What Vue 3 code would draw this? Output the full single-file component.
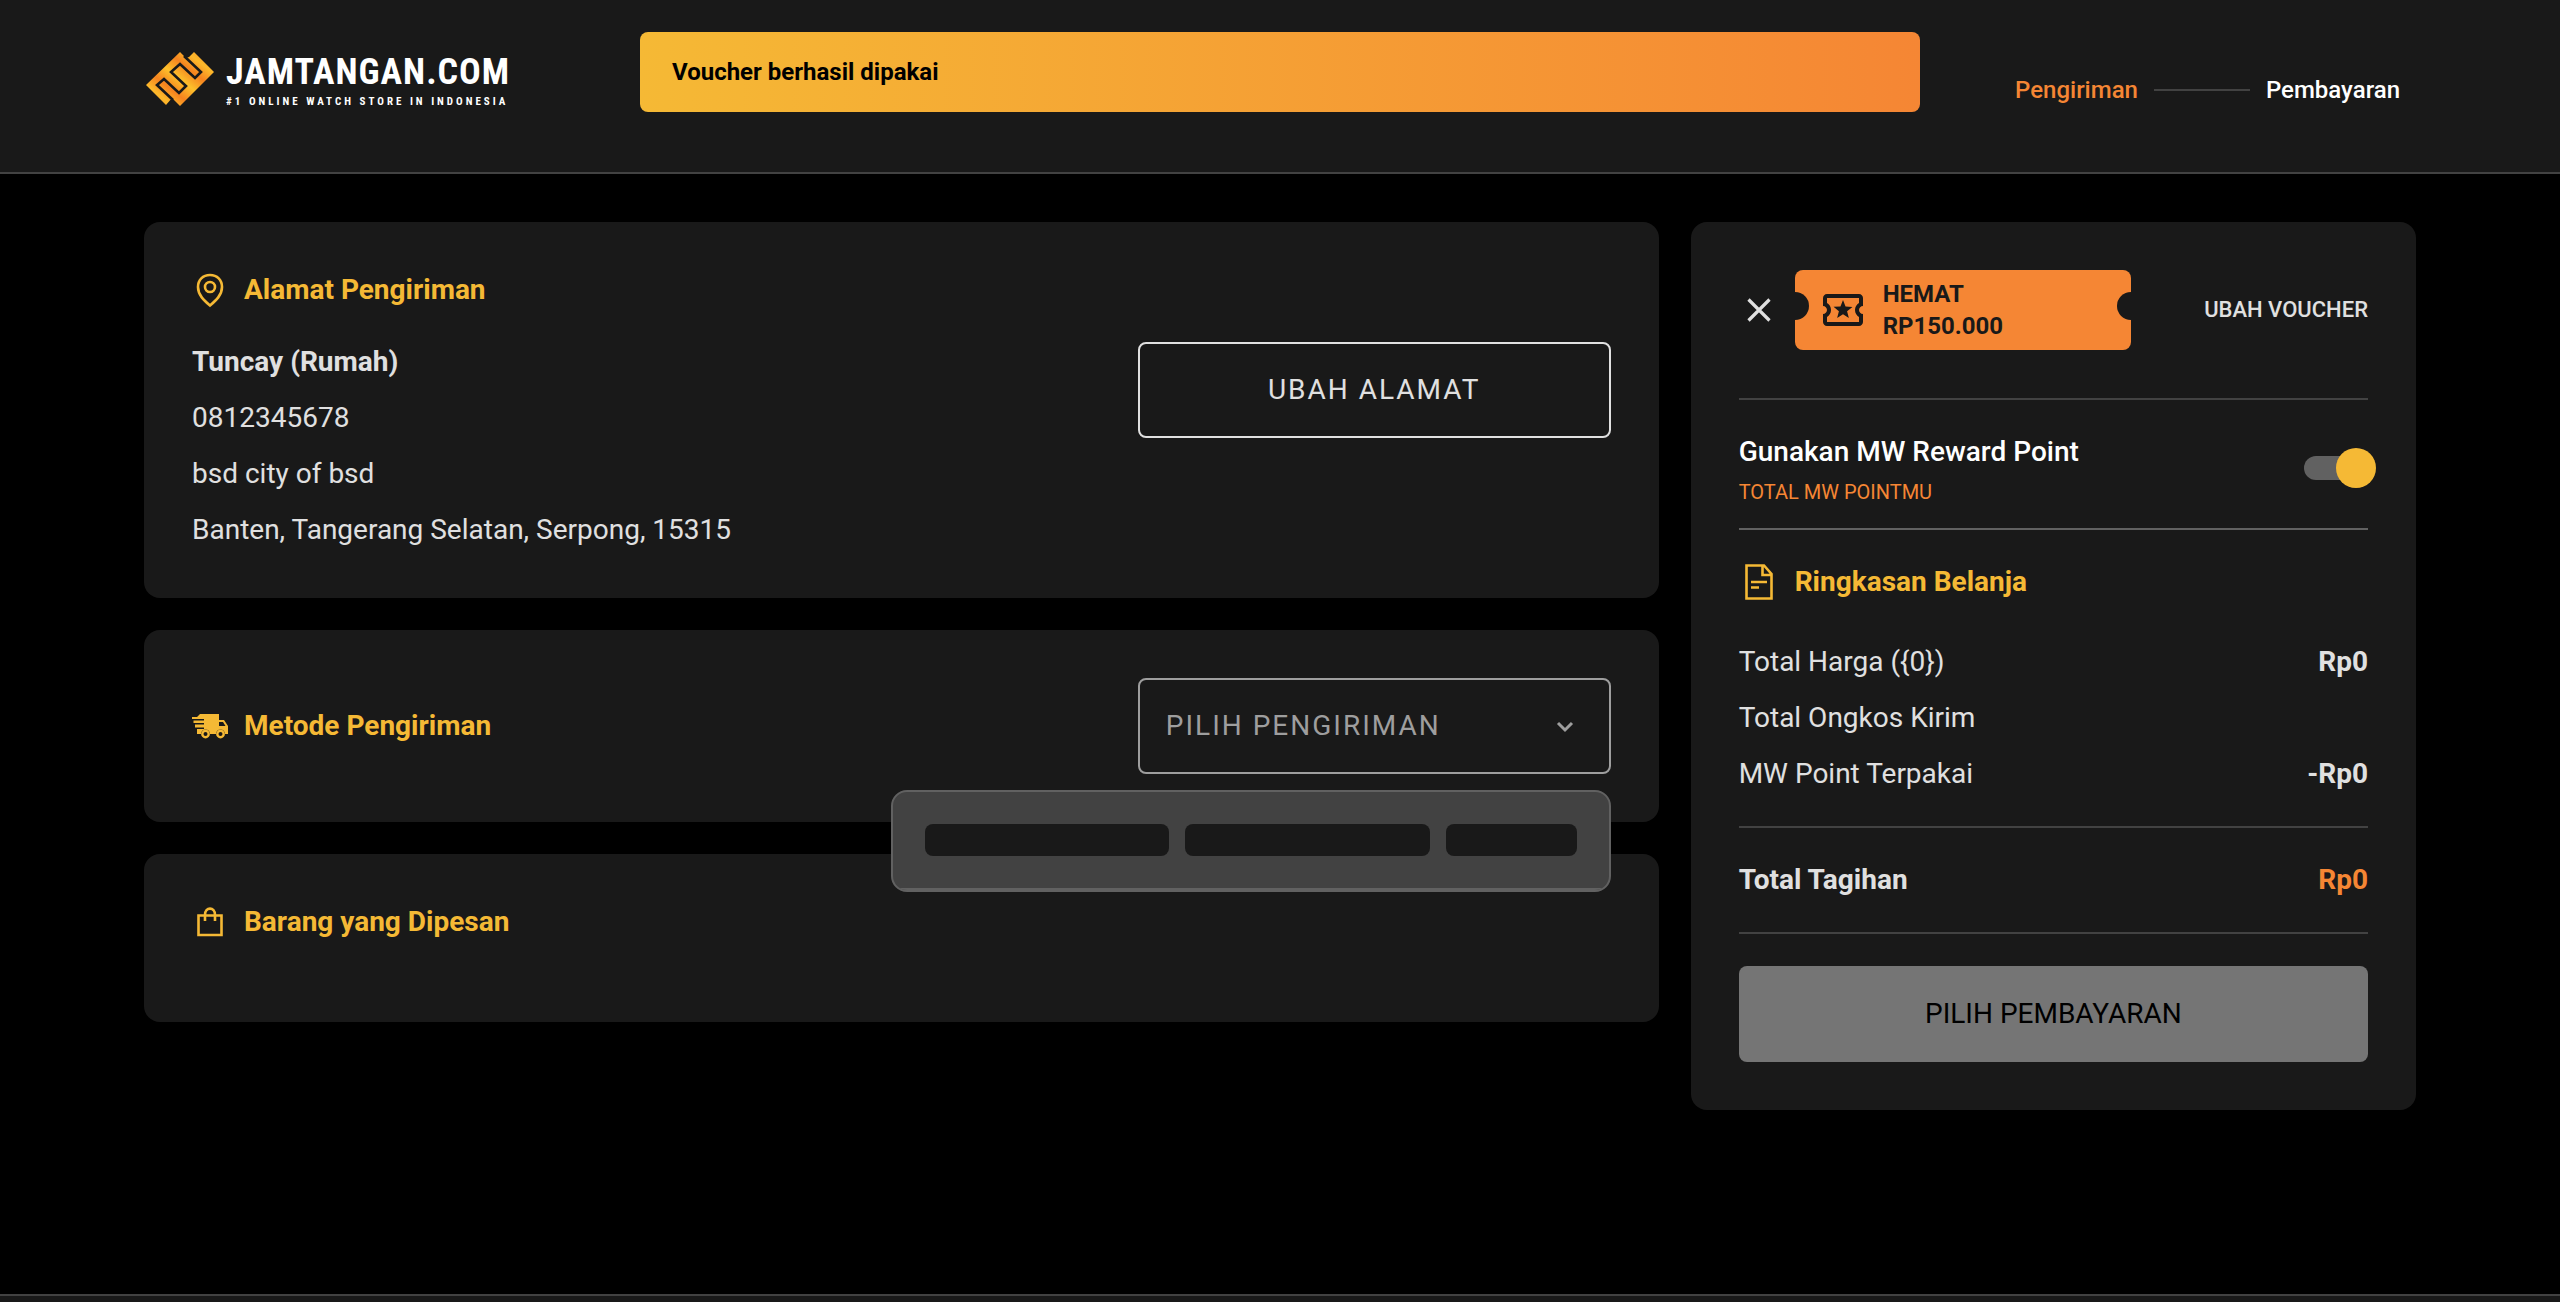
<script setup>
import { ref } from 'vue'

const usePoints = ref(true)
const addressLines = ['0812345678', 'bsd city of bsd', 'Banten, Tangerang Selatan, Serpong, 15315']
const summary = [
  { label: 'Total Harga ({0})', value: 'Rp0' },
  { label: 'Total Ongkos Kirim', value: '' },
  { label: 'MW Point Terpakai', value: '-Rp0' },
]
</script>

<template>
  <div class="page">
    <header class="header">
      <div class="container header-row">
        <a href="#" class="logo">
          <svg class="logo-mark" viewBox="0 0 68 54" aria-hidden="true">
            <defs>
              <linearGradient id="mark" x1="0" y1="1" x2="1" y2="0">
                <stop offset="0" stop-color="#f5831f" />
                <stop offset="0.2" stop-color="#fdb92b" />
                <stop offset="0.34" stop-color="#f5831f" />
                <stop offset="0.5" stop-color="#fdc02b" />
                <stop offset="0.66" stop-color="#f5831f" />
                <stop offset="0.8" stop-color="#fdb92b" />
                <stop offset="1" stop-color="#f5831f" />
              </linearGradient>
            </defs>
            <path fill="url(#mark)" d="M34 0 40 6 43 5 48 0 68 20 34 54 26 46 20 53 0 33Z" />
            <path
              d="M38 4 55 20 49 26 34 12 25 20 40 34 33 41 18 27 11 33 27 48"
              fill="none" stroke="#191919" stroke-width="2.6"
            />
          </svg>
          <span class="logo-text">
            <span class="logo-name">JAMTANGAN.COM</span>
            <span class="logo-tag">#1 ONLINE WATCH STORE IN INDONESIA</span>
          </span>
        </a>
        <nav class="steps">
          <a href="#" class="active">Pengiriman</a>
          <span class="steps-line"></span>
          <a href="#">Pembayaran</a>
        </nav>
      </div>
    </header>

    <div class="toast" role="status">Voucher berhasil dipakai</div>

    <main class="container columns">
      <div class="left">
        <section class="card">
          <h2 class="title">
            <svg viewBox="0 0 36 36" class="icon">
              <g fill="none" stroke="currentColor" stroke-width="2.6">
                <path d="M18 3C10.800 3 6 8 6 15c0 8 6 13.500 12 18.500C24 28.500 30 23 30 15 30 8 25.200 3 18 3Z" />
                <circle cx="18" cy="15" r="5" />
              </g>
            </svg>
            Alamat Pengiriman
          </h2>
          <div class="split">
            <div class="lines">
              <strong>Tuncay (Rumah)</strong>
              <span v-for="line in addressLines" :key="line">{{ line }}</span>
            </div>
            <button type="button" class="third outline">UBAH ALAMAT</button>
          </div>
        </section>

        <section class="card split middle">
          <h2 class="title">
            <svg viewBox="0 0 36 36" class="icon" fill="currentColor">
              <path d="M8 6H27V12H32L36 18V26H33A4.500 4.500 0 0 0 24 26H18A4.500 4.500 0 0 0 9 26H5V21H12V19.500H3V16.500H12V15H1.500V12.500H12V11H0V9H5Z" />
              <path d="M27 14V18H33.500L31 14Z" fill="#191919" />
              <g fill="none" stroke="currentColor" stroke-width="2.4">
                <circle cx="13.500" cy="26" r="3.200" />
                <circle cx="28.500" cy="26" r="3.200" />
              </g>
            </svg>
            Metode Pengiriman
          </h2>
          <div class="third picker">
            <select aria-label="Metode Pengiriman">
              <option>PILIH PENGIRIMAN</option>
            </select>
            <svg viewBox="0 0 18 12" class="chevron"><path d="M2 2 9 9 16 2" fill="none" stroke="currentColor" stroke-width="3" /></svg>
            <div class="menu">
              <div class="menu-row"><span></span><span></span><span></span></div>
            </div>
          </div>
        </section>

        <section class="card last">
          <h2 class="title">
            <svg viewBox="0 0 36 36" class="icon">
              <path d="M6.500 11.500H29.500V31H6.500ZM13 17V11C13 2.500 23 2.500 23 11V17" fill="none" stroke="currentColor" stroke-width="2.600" />
            </svg>
            Barang yang Dipesan
          </h2>
        </section>
      </div>

      <aside class="card side">
        <div class="voucher">
          <button type="button" class="close" aria-label="Hapus voucher">
            <svg viewBox="0 0 24 24"><path d="M1.500 1.500 22.500 22.500M22.500 1.500 1.500 22.500" stroke="currentColor" stroke-width="3.200" /></svg>
          </button>
          <div class="ticket">
            <svg viewBox="2 4 20 16" fill="currentColor">
              <path d="M22 10V6c0-1.110-.9-2-2-2H4c-1.100 0-1.990.890-1.990 2v4c1.100 0 1.990.9 1.990 2s-.890 2-2 2v4c0 1.100.9 2 2 2h16c1.100 0 2-.9 2-2v-4c-1.100 0-2-.9-2-2s.9-2 2-2zm-2-1.460c-1.190.690-2 1.990-2 3.460s.810 2.770 2 3.460V18H4v-2.540c1.190-.690 2-1.990 2-3.460 0-1.480-.8-2.770-1.990-3.460L4 6h16v2.540z" />
              <path d="M9.070 16 12 14.120 14.930 16l-.890-3.360 2.690-2.200-3.470-.210L12 7l-1.270 3.220-3.470.210 2.690 2.200z" />
            </svg>
            <span>HEMAT<br />RP150.000</span>
          </div>
          <a href="#" class="change">UBAH VOUCHER</a>
        </div>

        <div class="points">
          <label for="points">
            <span class="points-title">Gunakan MW Reward Point</span>
            <span class="points-sub">TOTAL MW POINTMU</span>
          </label>
          <input id="points" v-model="usePoints" type="checkbox" class="switch" />
        </div>

        <h2 class="title summary-title">
          <svg viewBox="0 0 40 40" class="icon">
            <path d="M7.500 3.500H25L32.500 12V36.500H7.500ZM23.500 4V13H32M12 20H28M12 25.500H20" fill="none" stroke="currentColor" stroke-width="2.600" />
          </svg>
          Ringkasan Belanja
        </h2>
        <dl class="rows">
          <div v-for="row in summary" :key="row.label">
            <dt>{{ row.label }}</dt>
            <dd>{{ row.value }}</dd>
          </div>
        </dl>
        <dl class="total">
          <dt>Total Tagihan</dt>
          <dd>Rp0</dd>
        </dl>
        <button type="button" class="pay">PILIH PEMBAYARAN</button>
      </aside>
    </main>

    <footer class="footer"></footer>
  </div>
</template>

<style>
body {
  margin: 0;
  background: #000;
}
</style>

<style scoped>
* {
  box-sizing: border-box;
}
.page {
  min-height: 100vh;
  display: flex;
  flex-direction: column;
  background: #000;
  color: #e0e0e0;
  font: 400 28px/40px Roboto, sans-serif;
}
a {
  color: inherit;
  text-decoration: none;
}
button {
  font: inherit;
  padding: 0;
  cursor: pointer;
}
.container {
  width: 100%;
  padding: 0 144px;
}
.header {
  background: #191919;
  border-bottom: 2px solid #424242;
}
.header-row {
  display: flex;
  justify-content: space-between;
  align-items: flex-start;
  height: 172px;
  padding-top: 52px;
}
.logo {
  display: flex;
  gap: 12px;
  padding-left: 2px;
  color: #fff;
}
.logo-mark {
  width: 68px;
  height: 54px;
}
.logo-text {
  display: flex;
  flex-direction: column;
  font-family: "Roboto Condensed", Roboto, sans-serif;
  font-weight: 700;
}
.logo-name {
  font-size: 36px;
  line-height: 40px;
  letter-spacing: 1px;
}
.logo-tag {
  font-size: 11px;
  line-height: 20px;
  letter-spacing: 3px;
}
.steps {
  display: flex;
  align-items: center;
  gap: 16px;
  margin: 18px 16px 0 0;
  color: #fff;
  font-size: 24px;
  font-weight: 500;
}
.steps .active {
  color: #f58634;
}
.steps-line {
  width: 96px;
  height: 2px;
  background: #424242;
}
.toast {
  position: fixed;
  top: 32px;
  left: 25%;
  width: 50%;
  padding: 20px 32px;
  border-radius: 8px;
  background: linear-gradient(90deg, #f5b935, #f58634);
  color: #000;
  font-size: 24px;
  font-weight: 700;
}
.columns {
  flex: 1;
  display: grid;
  grid-template-columns: 2fr 1fr;
  align-items: start;
  padding-top: 48px;
  padding-bottom: 32px;
}
.left {
  display: grid;
  gap: 32px;
}
.card {
  padding: 48px;
  border-radius: 16px;
  background: #191919;
}
.card.last {
  padding-bottom: 80px;
}
.side {
  margin-left: 32px;
}
.title {
  display: flex;
  align-items: center;
  gap: 16px;
  margin: 0;
  color: #f5b935;
  font-size: 28px;
  font-weight: 700;
  line-height: 40px;
}
.icon {
  width: 36px;
  height: 36px;
}
.split {
  display: flex;
  justify-content: space-between;
  align-items: flex-start;
}
.title + .split {
  margin-top: 32px;
}
.split.middle {
  align-items: center;
}
.third {
  width: calc(100% / 3);
  height: 96px;
}
.lines {
  display: flex;
  flex-direction: column;
  gap: 16px;
}
.outline {
  border: 2px solid #e0e0e0;
  border-radius: 8px;
  background: none;
  color: #e0e0e0;
  letter-spacing: 2px;
}
.picker {
  position: relative;
  color: #9e9e9e;
}
.picker select {
  width: 100%;
  height: 100%;
  padding: 0 26px;
  border: 2px solid #9e9e9e;
  border-radius: 8px;
  appearance: none;
  background: none;
  color: inherit;
  font: inherit;
  letter-spacing: 2px;
}
.chevron {
  position: absolute;
  right: 37px;
  top: 43px;
  width: 18px;
  height: 12px;
  pointer-events: none;
}
.menu {
  position: absolute;
  z-index: 1;
  top: 112px;
  right: 0;
  width: 720px;
  overflow: hidden;
  border: 2px solid #616161;
  border-radius: 16px;
  background: #424242;
}
.menu-row {
  display: grid;
  grid-template-columns: 15fr 15fr 8fr;
  gap: 16px;
  padding: 32px;
  border-bottom: 2px solid #616161;
}
.menu-row span {
  height: 32px;
  border-radius: 8px;
  background: #191919;
}
.voucher {
  display: flex;
  align-items: center;
  padding-bottom: 48px;
  border-bottom: 2px solid #424242;
}
.close {
  width: 40px;
  height: 40px;
  margin-right: 16px;
  border: 0;
  background: none;
  color: #e0e0e0;
}
.close svg {
  display: block;
  width: 24px;
  height: 24px;
  margin: 0 auto;
}
.ticket {
  position: relative;
  display: flex;
  align-items: center;
  gap: 20px;
  width: 336px;
  height: 80px;
  padding-left: 28px;
  overflow: hidden;
  border-radius: 8px;
  background: #f58634;
  color: #191919;
  font-size: 24px;
  font-weight: 700;
  line-height: 32px;
}
.ticket svg {
  width: 40px;
  height: 32px;
}
.ticket::before,
.ticket::after {
  content: "";
  position: absolute;
  top: 22px;
  left: -14px;
  width: 28px;
  height: 28px;
  border-radius: 50%;
  background: #191919;
}
.ticket::after {
  left: auto;
  right: -14px;
}
.change {
  margin-left: auto;
  font-size: 22px;
  font-weight: 500;
}
.points {
  display: flex;
  justify-content: space-between;
  align-items: center;
  padding: 32px 0 16px;
  border-bottom: 2px solid #616161;
}
.points label {
  display: flex;
  flex-direction: column;
}
.points-title {
  color: #fff;
  font-weight: 500;
}
.points-sub {
  color: #f58634;
  font-size: 20px;
}
.switch {
  position: relative;
  width: 64px;
  height: 24px;
  margin: 0 0 8px;
  border-radius: 12px;
  appearance: none;
  background: #616161;
}
.switch::before {
  content: "";
  position: absolute;
  top: -8px;
  left: -8px;
  width: 40px;
  height: 40px;
  border-radius: 50%;
  background: #9e9e9e;
}
.switch:checked::before {
  left: 32px;
  background: #f5b935;
}
.summary-title {
  margin: 32px 0 40px;
}
.summary-title .icon {
  width: 40px;
  height: 40px;
}
dl,
dd {
  margin: 0;
}
dd {
  font-weight: 700;
}
.rows {
  display: grid;
  gap: 16px;
  padding-bottom: 32px;
  border-bottom: 2px solid #424242;
}
.rows div,
.total {
  display: flex;
  justify-content: space-between;
}
.total {
  padding: 32px 0;
  border-bottom: 2px solid #424242;
  font-weight: 700;
}
.total dd {
  color: #f58634;
}
.pay {
  width: 100%;
  height: 96px;
  margin-top: 32px;
  border: 0;
  border-radius: 8px;
  background: #757575;
  color: #000;
}
.footer {
  height: 8px;
  border-top: 2px solid #424242;
  background: #191919;
}
</style>
